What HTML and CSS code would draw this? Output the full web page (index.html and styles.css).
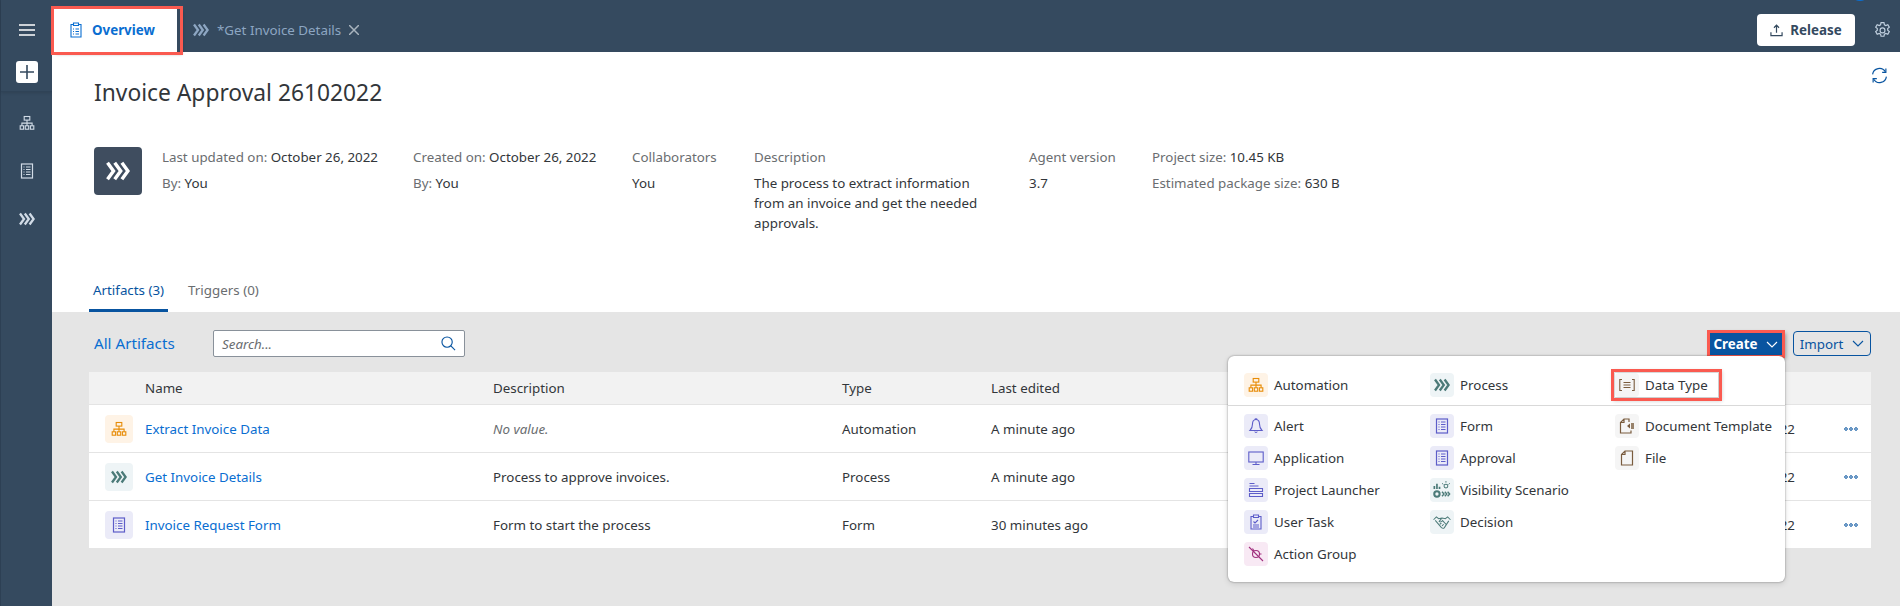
FILE: index.html
```html
<!DOCTYPE html>
<html lang="en">
<head>
    <meta charset="UTF-8">
    <title>Invoice Approval 26102022</title>
    <link rel="stylesheet" href="styles.css">
</head>
<body>

<svg class="sprites" width="0" height="0">
    <symbol id="i-org" viewBox="0 0 16 16" fill="none" stroke="currentColor" stroke-width="1.1">
        <rect x="5.2" y="1.5" width="5.6" height="3.6"/>
        <path d="M8 5.1v3M2.9 10.8V8.1h10.2v2.7M8 8.1v2.7"/>
        <rect x="1.2" y="10.8" width="3.4" height="3.4"/>
        <rect x="6.3" y="10.8" width="3.4" height="3.4"/>
        <rect x="11.4" y="10.8" width="3.4" height="3.4"/>
    </symbol>
    <symbol id="i-chev" viewBox="0 0 16 16" fill="none" stroke="currentColor" stroke-width="2.3">
        <path d="M1 2.5L5 8l-4 5.5M5.8 2.5L9.800 8l-4 5.5M10.600 2.500L14.600 8l-4 5.500"/>
    </symbol>
    <symbol id="i-form" viewBox="0 0 16 16" fill="none" stroke="currentColor" stroke-width="1.2">
        <rect x="2.5" y="1" width="11" height="14"/>
        <path d="M4.5 4h1M7 4h4.5M4.5 6.5h1M7 6.5h4.5M4.5 9h1M7 9h4.5M4.5 11.5h1M7 11.5h4.5"/>
    </symbol>
</svg>

<div class="app">
    <nav class="side">
        <div class="side-top">
            <svg class="burger" viewBox="0 0 16 12" fill="none" stroke="currentColor" stroke-width="1.7"><path d="M0 1h16M0 6h16M0 11h16"/></svg>
            <span class="plus-btn">
                <svg viewBox="0 0 14 14" fill="none" stroke="currentColor" stroke-width="1.6"><path d="M7 0v14M0 7h14"/></svg>
            </span>
        </div>
        <svg class="side-ico"><use href="#i-org"/></svg>
        <svg class="side-ico"><use href="#i-form"/></svg>
        <svg class="side-ico"><use href="#i-chev"/></svg>
    </nav>

    <div class="main">
        <header class="topbar">
            <div class="tab-active">
                <svg class="tab-ico" viewBox="0 0 16 16" fill="none" stroke="currentColor" stroke-width="1.1">
                    <path d="M5 2.5H3V15h10V2.500h-2M5.500 1h5v2.500h-5zM5 7h1M7.500 7h3.500M5 9.500h1M7.500 9.500h3.500M5 12h1M7.500 12h3.500"/>
                </svg>
                Overview
            </div>
            <div class="tab-other">
                <svg class="tab-ico"><use href="#i-chev"/></svg>
                <span>*Get Invoice Details</span>
                <svg class="tab-x" viewBox="0 0 10 10" fill="none" stroke="currentColor" stroke-width="1.5"><path d="M0 0l10 10M10 0L0 10"/></svg>
            </div>
            <button class="release-btn">
                <svg viewBox="0 0 14 14" fill="none" stroke="currentColor" stroke-width="1.3"><path d="M7 9.5v-8M4.300 4L7 1.200 9.700 4M1 9v3.500h12V9"/></svg>
                Release
            </button>
            <svg class="gear" viewBox="0 0 16 16" fill="none" stroke="currentColor" stroke-width="1.1">
                <path d="M6.600.6h2.800l.4 2 1.300.7 1.900-.8 1.400 2.400-1.500 1.300v1.600l1.500 1.300-1.400 2.400-1.900-.8-1.300.7-.4 2H6.600l-.4-2-1.300-.7-1.900.8-1.400-2.400 1.500-1.300V6.200L1.600 4.900 3 2.500l1.900.8 1.300-.7z"/>
                <circle cx="8" cy="7.900" r="2.300"/>
            </svg>
            <span class="avatar"></span>
        </header>

        <section class="overview">
            <svg class="refresh" viewBox="0 0 16 16" fill="none" stroke="currentColor" stroke-width="1.1">
                <path d="M1.500 7A6.500 6.500 0 0 1 13.500 4.500M14.500 9A6.500 6.500 0 0 1 2.500 11.500"/>
                <path d="M14 1.500V5h-3.500M2 14.500V11h3.500"/>
            </svg>
            <h1>Invoice Approval 26102022</h1>
            <div class="meta">
                <span class="meta-icon"><svg><use href="#i-chev"/></svg></span>
                <div class="col col-updated">
                    <div><span class="lbl">Last updated on:</span> October 26, 2022</div>
                    <div><span class="lbl">By:</span> You</div>
                </div>
                <div class="col col-created">
                    <div><span class="lbl">Created on:</span> October 26, 2022</div>
                    <div><span class="lbl">By:</span> You</div>
                </div>
                <div class="col col-collab">
                    <div class="lbl">Collaborators</div>
                    <div>You</div>
                </div>
                <div class="col col-desc">
                    <div class="lbl">Description</div>
                    <div>The process to extract information from an invoice and get the needed approvals.</div>
                </div>
                <div class="col col-agent">
                    <div class="lbl">Agent version</div>
                    <div>3.7</div>
                </div>
                <div class="col">
                    <div><span class="lbl">Project size:</span> 10.45 KB</div>
                    <div><span class="lbl">Estimated package size:</span> 630 B</div>
                </div>
            </div>
            <div class="tabs">
                <span class="tab current">Artifacts (3)</span>
                <span class="tab">Triggers (0)</span>
            </div>
        </section>

        <section class="artifacts">
            <div class="toolbar">
                <span class="all-title">All Artifacts</span>
                <div class="search">
                    <span>Search...</span>
                    <svg viewBox="0 0 16 16" fill="none" stroke="currentColor" stroke-width="1.2"><circle cx="6.500" cy="6.500" r="5.500"/><path d="M10.500 10.500L15 15"/></svg>
                </div>
                <button class="btn-create outlined">Create <svg viewBox="0 0 12 7" fill="none" stroke="currentColor" stroke-width="1.1"><path d="M1 1l5 5 5-5"/></svg></button>
                <button class="btn-import">Import <svg viewBox="0 0 12 7" fill="none" stroke="currentColor" stroke-width="1.1"><path d="M1 1l5 5 5-5"/></svg></button>

                <div class="popup">
                    <div class="popup-top">
                        <div class="pop-item"><span class="badge orange"><svg><use href="#i-org"/></svg></span>Automation</div>
                        <div class="pop-item"><span class="badge teal"><svg><use href="#i-chev"/></svg></span>Process</div>
                        <div class="pop-item data-type outlined"><span class="badge brown">
                            <svg viewBox="0 0 16 16" fill="none" stroke="currentColor" stroke-width="1.1"><path d="M3 2.500H.8v11H3M13 2.500h2.200v11H13M4.500 5.500h7M4.500 8h7M4.500 10.500h7"/></svg>
                        </span>Data Type</div>
                    </div>
                    <div class="popup-grid">
                        <div class="pop-col">
                            <div class="pop-item"><span class="badge violet">
                                <svg viewBox="0 0 16 16" fill="none" stroke="currentColor" stroke-width="1.1"><path d="M8 1.500C5.500 1.500 4.500 3.500 4.500 6c0 3.500-1 5-2.500 6.500h12C12.500 11 11.500 9.500 11.500 6c0-2.500-1-4.500-3.500-4.500zM7 1.500C7 .5 9 .5 9 1.500M6.800 13.500c.3 1.300 2.100 1.300 2.400 0"/></svg>
                            </span>Alert</div>
                            <div class="pop-item"><span class="badge violet">
                                <svg viewBox="0 0 16 16" fill="none" stroke="currentColor" stroke-width="1.1"><rect x=".8" y="2" width="14.4" height="10"/><path d="M8 12v2M4.500 14.500h7"/></svg>
                            </span>Application</div>
                            <div class="pop-item"><span class="badge violet">
                                <svg viewBox="0 0 16 16" fill="none" stroke="currentColor" stroke-width="1.1"><path d="M1.500 1.500h5M1.500 6.500h13v3h-13zM1.500 11.500h13v3h-13zM1.500 4h9"/></svg>
                            </span>Project Launcher</div>
                            <div class="pop-item"><span class="badge violet">
                                <svg viewBox="0 0 16 16" fill="none" stroke="currentColor" stroke-width="1.1"><path d="M5 2.500H3V15h10V2.500h-2M5.500 1h5v2.500h-5zM5.500 7.500L7 9l3-3M5 11h6M5 13h6"/></svg>
                            </span>User Task</div>
                            <div class="pop-item"><span class="badge pink">
                                <svg viewBox="0 0 16 16" fill="none" stroke="currentColor" stroke-width="1.1"><path d="M1 1l14 14"/><circle cx="8" cy="8" r="3.500"/><path d="M4.500 2.500L6 5M11.500 8h2"/></svg>
                            </span>Action Group</div>
                        </div>
                        <div class="pop-col">
                            <div class="pop-item"><span class="badge violet"><svg><use href="#i-form"/></svg></span>Form</div>
                            <div class="pop-item"><span class="badge violet"><svg><use href="#i-form"/></svg></span>Approval</div>
                            <div class="pop-item"><span class="badge teal">
                                <svg class="wide" viewBox="0 0 16 16" fill="none" stroke="currentColor"><path d="M1.200 7V4.500M3.500 7V2.500M5.800 7V5" stroke-width="1.500"/><circle cx="3.500" cy="11.500" r="2.400" stroke-width="1.800"/><path d="M8 9.500l1.800 2-1.800 2M10.500 9.500l1.800 2-1.800 2M13 9.500l1.800 2-1.800 2" stroke-width="1.200"/><circle cx="11.500" cy="4.500" r="1.700" stroke-width=".9"/><path d="M11.500 0v1.500M8 2l1.200 1M15 2l-1.200 1" stroke-width=".8"/></svg>
                            </span>Visibility Scenario</div>
                            <div class="pop-item"><span class="badge teal">
                                <svg class="wide" viewBox="0 0 16 16" fill="none" stroke="currentColor" stroke-width=".9"><path d="M.5 6L3 3.500 5 5l3-.5 3 .5 2-1.500L15.500 6M2 6.500l5.500 6.500c1 .8 1.800.8 2.500.2L14 7M7.500 5L5.500 7.500c1 .8 2 .5 3-.8l3 3.300M6 10l1.500-1M8 11.500L9.500 10"/></svg>
                            </span>Decision</div>
                        </div>
                        <div class="pop-col">
                            <div class="pop-item"><span class="badge brown">
                                <svg viewBox="0 0 16 16" fill="none" stroke="currentColor" stroke-width="1.2"><path d="M10 4V1H5L1.500 4.500V15H12v-2.500M5 1v3.500H1.500"/><path d="M8 8l3-2.500v5z" fill="currentColor" stroke="none"/><path d="M12 6h3M12 8h3M12 10h3" stroke-width="1.5"/></svg>
                            </span>Document Template</div>
                            <div class="pop-item"><span class="badge brown">
                                <svg viewBox="0 0 16 16" fill="none" stroke="currentColor" stroke-width="1.2"><path d="M6 1h7.500v14h-11V4.500zM6 1v3.500H2.500"/></svg>
                            </span>File</div>
                        </div>
                    </div>
                </div>
            </div>

            <div class="table">
                <div class="row head">
                    <span></span><span>Name</span><span>Description</span><span>Type</span><span>Last edited</span><span></span><span></span>
                </div>
                <div class="row">
                    <span class="badge big orange"><svg><use href="#i-org"/></svg></span>
                    <a class="link">Extract Invoice Data</a>
                    <span class="none">No value.</span>
                    <span>Automation</span>
                    <span>A minute ago</span>
                    <span class="date">22</span>
                    <svg class="dots" viewBox="0 0 14 4" fill="none" stroke="currentColor"><circle cx="2" cy="2" r="1.300"/><circle cx="7" cy="2" r="1.300"/><circle cx="12" cy="2" r="1.300"/></svg>
                </div>
                <div class="row">
                    <span class="badge big teal"><svg><use href="#i-chev"/></svg></span>
                    <a class="link">Get Invoice Details</a>
                    <span>Process to approve invoices.</span>
                    <span>Process</span>
                    <span>A minute ago</span>
                    <span class="date">22</span>
                    <svg class="dots" viewBox="0 0 14 4" fill="none" stroke="currentColor"><circle cx="2" cy="2" r="1.300"/><circle cx="7" cy="2" r="1.300"/><circle cx="12" cy="2" r="1.300"/></svg>
                </div>
                <div class="row">
                    <span class="badge big violet"><svg><use href="#i-form"/></svg></span>
                    <a class="link">Invoice Request Form</a>
                    <span>Form to start the process</span>
                    <span>Form</span>
                    <span>30 minutes ago</span>
                    <span class="date">22</span>
                    <svg class="dots" viewBox="0 0 14 4" fill="none" stroke="currentColor"><circle cx="2" cy="2" r="1.300"/><circle cx="7" cy="2" r="1.300"/><circle cx="12" cy="2" r="1.300"/></svg>
                </div>
            </div>
        </section>
    </div>
</div>

</body>
</html>
```

FILE: styles.css
```css
:root {
    --shell: #354a5f;
    --text: #32363a;
    --label: #6a6d70;
    --blue: #0a6ed1;
    --dark-blue: #0854a0;
    --red: #fa5a50;
    --font: "Noto Sans", "Liberation Sans", sans-serif;
}

* { box-sizing: border-box; }

html, body { height: 100%; }

body {
    margin: 0;
    overflow: hidden;
    font-family: var(--font);
    font-size: 13.35px;
    color: var(--text);
    background: #e5e5e5;
}

.sprites { position: absolute; }

.app { display: flex; height: 606px; }

/* Left rail */
.side {
    width: 52px;
    flex: none;
    background: var(--shell);
    color: #d1dbe6;
    display: flex;
    flex-direction: column;
    align-items: center;
    border-left: 1px solid #2d4054;
}

.side-top {
    width: 100%;
    height: 92px;
    padding-top: 24px;
    display: flex;
    flex-direction: column;
    align-items: center;
    gap: 25px;
    border-bottom: 1px solid #2f4357;
    box-shadow: 0 1px 3px rgba(0,0,0,0.12);
    margin-bottom: 23px;
    color: #fff;
}

.burger { width: 16px; height: 12px; flex: none; }

.plus-btn {
    width: 22px;
    height: 22px;
    border-radius: 3px;
    background: #fff;
    color: var(--shell);
    display: flex;
    align-items: center;
    justify-content: center;
}
.plus-btn svg { width: 14px; height: 14px; }

.side-ico { width: 16px; height: 16px; margin-bottom: 32px; }

.main { flex: 1; min-width: 0; display: flex; flex-direction: column; }

/* Top tabs */
.topbar {
    height: 52px;
    background: var(--shell);
    display: flex;
    align-items: center;
    position: relative;
    padding: 8px 9px 0 0;
}

.tab-active {
    align-self: flex-end;
    margin-left: 2px;
    width: 126px;
    height: 43px;
    background: #fff;
    color: var(--blue);
    font-weight: 700;
    display: flex;
    align-items: center;
    gap: 8px;
    padding: 0 0 2px 14px;
    outline: 3px solid var(--red);
    box-shadow: inset -3px 0 0 var(--shell), 2px 2px 3px rgba(0,0,0,0.4);
    position: relative;
    z-index: 2;
}

.tab-ico { width: 16px; height: 16px; flex: none; }

.tab-other {
    margin-left: 13px;
    display: flex;
    align-items: center;
    gap: 8px;
    color: #8da6c2;
    flex: 1;
}
.tab-x { width: 10px; height: 10px; color: #a9b4be; }

.release-btn {
    width: 98px;
    height: 32px;
    border: none;
    border-radius: 4px;
    background: #fff;
    color: var(--shell);
    font: 700 13.35px var(--font);
    display: flex;
    align-items: center;
    justify-content: center;
    gap: 7px;
}
.release-btn svg { width: 13px; height: 13px; }

.gear { width: 17px; height: 17px; margin-left: 19px; color: #c1d0df; }

.avatar {
    position: absolute;
    top: -19px;
    right: 30px;
    width: 20px;
    height: 20px;
    border-radius: 50%;
    background: var(--blue);
}

/* Project header */
.overview {
    height: 260px;
    background: #fff;
    padding-left: 37px;
    position: relative;
}

.refresh {
    position: absolute;
    top: 15px;
    right: 12px;
    width: 17px;
    height: 17px;
    color: var(--dark-blue);
}

h1 {
    margin: 0;
    padding: 22px 0 0 5px;
    font-size: 22.8px;
    font-weight: 400;
    line-height: 38px;
    height: 95px;
}

.meta { display: flex; height: 133px; padding-left: 5px; }

.meta-icon {
    width: 48px;
    height: 48px;
    flex: none;
    margin-right: 20px;
    border-radius: 4px;
    background: #3f4d5f;
    color: #fff;
    display: flex;
    align-items: center;
    justify-content: center;
}
.meta-icon svg { width: 24px; height: 24px; }

.col { line-height: 20px; }
.col > div { margin-bottom: 6px; }
.col > div:last-child { margin-bottom: 0; }
.lbl { color: var(--label); }

.col-updated { width: 251px; }
.col-created { width: 219px; }
.col-collab { width: 122px; }
.col-desc { width: 275px; }
.col-desc > div:last-child { width: 235px; }
.col-agent { width: 123px; }

.tabs { display: flex; gap: 16px; height: 32px; }
.tab {
    color: var(--label);
    padding: 0 4px;
    height: 32px;
    line-height: 20px;
}
.tab.current {
    color: var(--dark-blue);
    border-bottom: 3px solid var(--dark-blue);
    border-radius: 2px 2px 0 0;
}

/* Artifact list */
.artifacts { flex: 1; padding: 0 29px 0 37px; }

.toolbar {
    height: 60px;
    display: flex;
    align-items: flex-start;
    padding-top: 18px;
    position: relative;
}

.all-title {
    color: var(--blue);
    font-size: 15.2px;
    margin-left: 5px;
    line-height: 26px;
    width: 119px;
}

.search {
    width: 252px;
    height: 27px;
    background: #fff;
    border: 1px solid #89919a;
    border-radius: 2px;
    display: flex;
    align-items: center;
    justify-content: space-between;
    padding: 0 8px;
    color: var(--label);
    font-style: italic;
}
.search svg { width: 15px; height: 15px; color: var(--dark-blue); }

.btn-create, .btn-import {
    font: 400 13.35px var(--font);
    display: flex;
    align-items: center;
    justify-content: center;
    gap: 9px;
    padding: 0;
}
.btn-create svg, .btn-import svg { width: 12px; height: 7px; }

.btn-create {
    width: 72px;
    height: 22px;
    margin: 3px 0 0 auto;
    background: var(--dark-blue);
    color: #fff;
    border: none;
    font-weight: 700;
    position: relative;
    z-index: 2;
}

.btn-import {
    width: 78px;
    height: 25px;
    margin: 1px 0 0 11px;
    background: transparent;
    color: var(--dark-blue);
    border: 1px solid var(--dark-blue);
    border-radius: 4px;
}

.outlined {
    outline: 3px solid var(--red);
    box-shadow: 2px 2px 4px 2px rgba(0,0,0,0.35);
}

/* Create menu */
.popup {
    position: absolute;
    top: 44px;
    left: 1139px;
    width: 557px;
    height: 226px;
    background: #fff;
    border-radius: 6px;
    box-shadow: 0 0 2px rgba(0,0,0,0.45), 0 2px 6px rgba(0,0,0,0.12);
    z-index: 3;
}

.popup-top {
    height: 50px;
    padding-top: 17px;
    border-bottom: 1px solid #d9d9d9;
    display: flex;
}

.popup-grid { display: flex; padding-top: 8px; }
.pop-col { display: flex; flex-direction: column; gap: 8px; }

.popup-top .pop-item:nth-child(1), .pop-col:nth-child(1) { width: 186px; margin-left: 16px; }
.popup-top .pop-item:nth-child(2), .pop-col:nth-child(2) { width: 185px; }

.pop-item {
    display: flex;
    align-items: center;
    gap: 6px;
    height: 24px;
    white-space: nowrap;
}

.data-type {
    width: 103px;
    outline-offset: 1px;
    box-shadow: 1px 1px 4px 3px rgba(0,0,0,0.2);
}

.badge {
    width: 24px;
    height: 24px;
    flex: none;
    border-radius: 4px;
    display: flex;
    align-items: center;
    justify-content: center;
}
.badge svg { width: 16px; height: 16px; }
.badge svg.wide { width: 18px; height: 18px; }
.badge.big { width: 28px; height: 28px; }

.orange { background: #fef3e6; color: #e78c07; }
.teal { background: #eef4f6; color: #4b7a78; }
.violet { background: #ebebf8; color: #5d5dc9; }
.pink { background: #f8e9f4; color: #a1307e; }
.brown { background: #f5f5f5; color: #7a5c3e; }

/* Table */
.table { background: #fff; }

.row {
    display: grid;
    grid-template-columns: 56px 348px 349px 149px 1fr 130px 76px;
    align-items: center;
    height: 48px;
    border-top: 1px solid #e4e4e4;
    line-height: 18px;
}
.row > span:first-child { margin-left: 16px; }

.row.head {
    height: 33px;
    background: #f2f2f2;
    border-top: none;
    border-bottom: 1px solid #e4e4e4;
}
.row.head + .row { border-top: none; height: 47px; }

.link { color: var(--blue); }
.none { color: var(--label); font-style: italic; }
.date { text-align: right; }

.dots {
    width: 14px;
    height: 4px;
    margin-left: 49px;
    color: var(--dark-blue);
}
```
